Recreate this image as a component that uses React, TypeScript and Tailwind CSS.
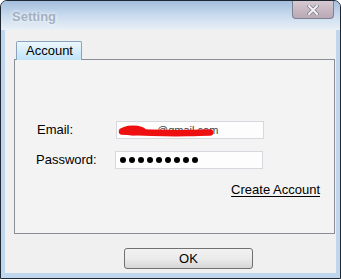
export default function App() {
	const dots = [0, 1, 2, 3, 4, 5, 6, 7, 8]

	return (
		<div
			className="w-[341px] h-[279px] flex flex-col rounded-t-[7px] border border-[#1e2833] bg-[#c0d6ed] overflow-hidden"
			style={{ fontFamily: '"Liberation Sans", Arial, sans-serif' }}
		>
			{/* title bar */}
			<div className="h-[29px] shrink-0 flex justify-between bg-gradient-to-b from-[#a4bfdd] via-[#c9dbee] to-[#eaf0f7]">
				<div className="pl-[11px] pt-[6px] text-[13px] font-bold text-[#a3b1c2] [text-shadow:0_0_4px_#ffffff]">
					Setting
				</div>
				<div className="mr-[6px] w-[42px] h-[18px] rounded-b-[4px] border border-t-0 border-[#7f8190] bg-gradient-to-b from-[#d6c9d1] to-[#b9a8b5] flex items-center justify-center">
					<svg width="12" height="10" viewBox="0 0 12 10">
						<path d="M2 1 L10 9 M10 1 L2 9" stroke="#7d7f8c" strokeWidth="3.4" strokeLinecap="square" />
						<path d="M2 1 L10 9 M10 1 L2 9" stroke="#f4f4f6" strokeWidth="2" strokeLinecap="square" />
					</svg>
				</div>
			</div>

			{/* client area */}
			<div className="flex-1 mx-[4px] mb-[5px] bg-[#f0f0f0] pl-[9px] pr-[2px] pt-[11px] flex flex-col">
				<div className="flex">
					<div className="relative z-10 ml-[2px] -mb-px w-[66px] h-[19px] border border-b-0 border-[#8aa3bd] rounded-t-[2px] bg-gradient-to-b from-[#ecf7fd] to-[#bfe3f8] pl-[9px] pt-[1px] text-[13px] leading-[16px] text-black">
						Account
					</div>
				</div>
				<div className="w-[321px] h-[175px] border border-[#8a8d95] bg-[#f3f3f3] pt-[61px] pl-[22px] pr-[14px] flex flex-col">
					<div className="flex items-center h-[18px]">
						<div className="w-[79px] text-[13px] text-black">Email:</div>
						<div className="relative w-[148px] h-[18px] border border-[#d6d8dd] bg-[#fdfdfd] overflow-hidden">
							<span className="absolute left-[40px] top-[1px] text-[11px] leading-[14px] text-[#444]">
								@gmail.com
							</span>
							<svg className="absolute left-0 top-0" width="148" height="18" viewBox="0 0 148 18">
								<path
									d="M5 9.5 C 25 10.5, 50 11.5, 70 11 S 88 10.5, 93 10.5"
									fill="none"
									stroke="#ee1010"
									strokeWidth="6.5"
									strokeLinecap="round"
								/>
								<ellipse cx="16" cy="8.5" rx="13" ry="5" fill="#ee1010" />
							</svg>
						</div>
					</div>
					<div className="flex items-center h-[18px] mt-[12px]">
						<div className="w-[78px] -ml-px text-[13px] text-black">Password:</div>
						<div className="ml-px w-[148px] h-[18px] border border-[#d6d8dd] bg-[#fdfdfd] flex items-center gap-[3px] pl-[4px]">
							{dots.map((d) => (
								<div key={d} className="w-[6px] h-[6px] rounded-full bg-black"></div>
							))}
						</div>
					</div>
					<div className="mt-[13px] flex justify-end">
						<span className="text-[13px] leading-[15px] text-black underline underline-offset-2">Create Account</span>
					</div>
				</div>
				<div className="mt-[14px] ml-[110px] w-[129px] h-[21px] rounded-[3px] border border-[#707070] bg-gradient-to-b from-[#f2f2f2] via-[#ebebeb] to-[#d6d6d6] flex items-center justify-center text-[13px] text-black">
					OK
				</div>
			</div>
		</div>
	)
}
